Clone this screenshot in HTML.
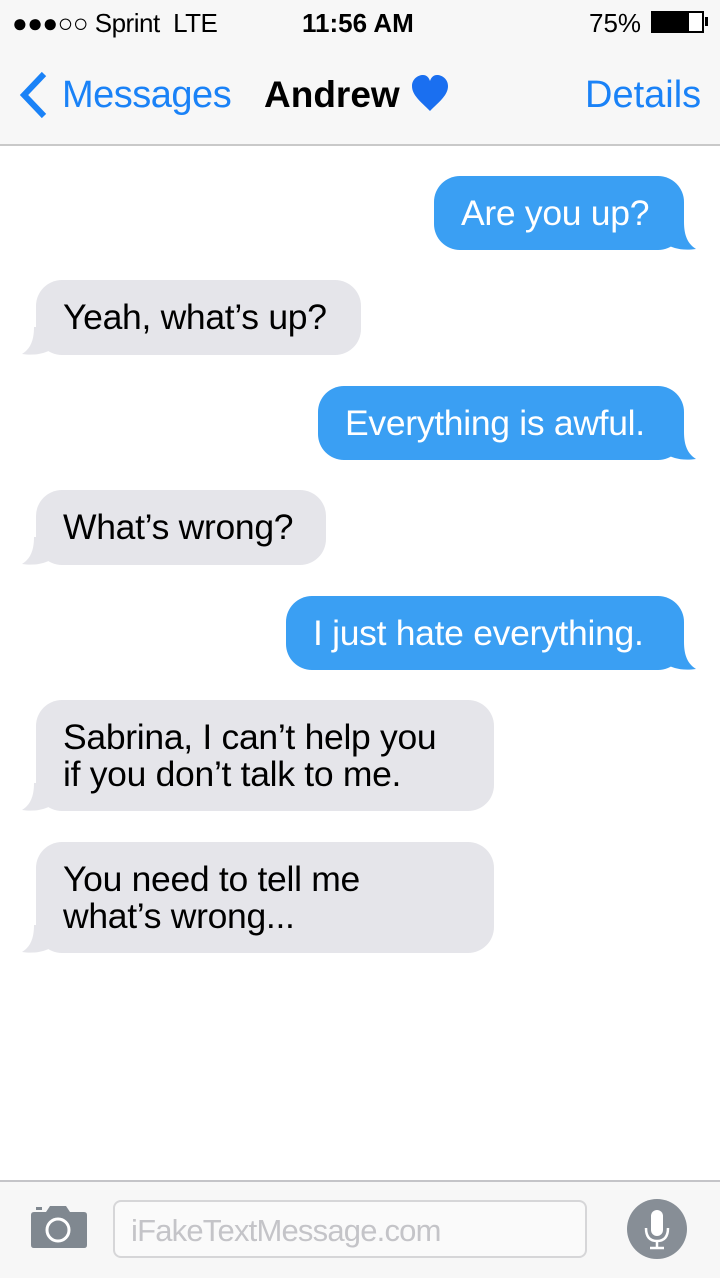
<!DOCTYPE html>
<html><head><style>
*{margin:0;padding:0;box-sizing:border-box}
body{width:720px;height:1278px;background:#fff;font-family:"Liberation Sans",sans-serif;position:relative;overflow:hidden}
.top{position:absolute;left:0;top:0;width:720px;height:146px;background:#f7f7f7;border-bottom:2px solid #c9c9c9}
.t{position:absolute;white-space:nowrap}
.b{position:absolute;font-size:35.5px;line-height:37px;padding-left:27px;border-radius:26px;white-space:nowrap;letter-spacing:-0.3px}
.s{background:#3a9ff3;color:#fff}
.r{background:#e5e5ea;color:#000}
.tail{position:absolute}
.bot{position:absolute;left:0;top:1180px;width:720px;height:98px;background:#f7f7f7;border-top:2px solid #c4c4c8}
</style></head><body>
<div class="top">
<div class="t" style="left:12px;top:8px;font-size:26px;letter-spacing:-0.5px">●●●○○ Sprint&nbsp; LTE</div>
<div class="t" style="left:302px;top:8px;font-size:26px;font-weight:bold">11:56 AM</div>
<div class="t" style="left:589px;top:8px;font-size:26px">75%</div>
<div style="position:absolute;left:651px;top:11px;width:53px;height:22px;background:#fff;border:2px solid #000"><div style="width:36px;height:18px;background:#000"></div></div>
<div style="position:absolute;left:705px;top:17px;width:3px;height:9px;background:#000"></div>
<svg style="position:absolute;left:16px;top:70px" width="34" height="50"><path d="M28 4 L8 25 L28 46" stroke="#1a82f7" stroke-width="6" fill="none"/></svg>
<div class="t" style="left:62px;top:74px;font-size:38px;color:#1a82f7;letter-spacing:-0.5px">Messages</div>
<div class="t" style="left:264px;top:74px;font-size:37px;font-weight:bold">Andrew</div>
<svg style="position:absolute;left:410px;top:75px" width="40" height="38"><path d="M20 36 C10 26 2 20 2 11 C2 4 8 0 13 0 C17 0 19 3 20 6 C21 3 23 0 27 0 C32 0 38 4 38 11 C38 20 30 26 20 36Z" fill="#1a6ff0"/></svg>
<div class="t" style="left:585px;top:74px;font-size:38px;color:#1a82f7">Details</div>
</div>

<svg class="tail" style="left:660px;top:222px" width="36" height="30"><path d="M0 0 L24 0 C24 14 28 22 36 27 C22 29 12 26 6 22Z" fill="#3a9ff3"/></svg>
<div class="b s" style="left:434px;top:176px;width:250px;height:74px;padding-top:19px">Are you up?</div>
<svg class="tail" style="left:22px;top:327px" width="36" height="30"><path d="M36 0 L12 0 C12 14 8 22 0 27 C14 29 24 26 30 22Z" fill="#e5e5ea"/></svg>
<div class="b r" style="left:36px;top:280px;width:325px;height:75px;padding-top:19px">Yeah, what’s up?</div>
<svg class="tail" style="left:660px;top:432px" width="36" height="30"><path d="M0 0 L24 0 C24 14 28 22 36 27 C22 29 12 26 6 22Z" fill="#3a9ff3"/></svg>
<div class="b s" style="left:318px;top:386px;width:366px;height:74px;padding-top:19px">Everything is awful.</div>
<svg class="tail" style="left:22px;top:537px" width="36" height="30"><path d="M36 0 L12 0 C12 14 8 22 0 27 C14 29 24 26 30 22Z" fill="#e5e5ea"/></svg>
<div class="b r" style="left:36px;top:490px;width:290px;height:75px;padding-top:19px">What’s wrong?</div>
<svg class="tail" style="left:660px;top:642px" width="36" height="30"><path d="M0 0 L24 0 C24 14 28 22 36 27 C22 29 12 26 6 22Z" fill="#3a9ff3"/></svg>
<div class="b s" style="left:286px;top:596px;width:398px;height:74px;padding-top:19px">I just hate everything.</div>
<svg class="tail" style="left:22px;top:783px" width="36" height="30"><path d="M36 0 L12 0 C12 14 8 22 0 27 C14 29 24 26 30 22Z" fill="#e5e5ea"/></svg>
<div class="b r" style="left:36px;top:700px;width:458px;height:111px;padding-top:19px">Sabrina, I can’t help you<br>if you don’t talk to me.</div>
<svg class="tail" style="left:22px;top:925px" width="36" height="30"><path d="M36 0 L12 0 C12 14 8 22 0 27 C14 29 24 26 30 22Z" fill="#e5e5ea"/></svg>
<div class="b r" style="left:36px;top:842px;width:458px;height:111px;padding-top:19px">You need to tell me<br>what’s wrong...</div>

<div class="bot">
<svg style="position:absolute;left:30px;top:22px" width="58" height="44"><path d="M4 8 H16 L20 2 H36 L40 8 H54 Q57 8 57 11 V41 Q57 44 54 44 H4 Q1 44 1 41 V11 Q1 8 4 8Z" fill="#808890"/><rect x="6" y="3" width="6" height="3" fill="#808890"/><circle cx="28" cy="26" r="11" fill="none" stroke="#fff" stroke-width="3"/></svg>
<div style="position:absolute;left:113px;top:18px;width:474px;height:58px;border:2px solid #d6d6d8;border-radius:8px;background:#fafafa"></div>
<div class="t" style="left:131px;top:31px;font-size:31px;color:#c4c4c8;letter-spacing:-0.8px">iFakeTextMessage.com</div>
<svg style="position:absolute;left:627px;top:16px" width="62" height="62"><circle cx="30" cy="31" r="30" fill="#878e96"/><rect x="24" y="12" width="12" height="26" rx="6" fill="#fff"/><path d="M19 30 Q19 43 30 43 Q41 43 41 30" stroke="#fff" stroke-width="2.5" fill="none"/><path d="M30 43 V50 M23 50 H37" stroke="#fff" stroke-width="2.5"/></svg>
</div>
</body></html>
